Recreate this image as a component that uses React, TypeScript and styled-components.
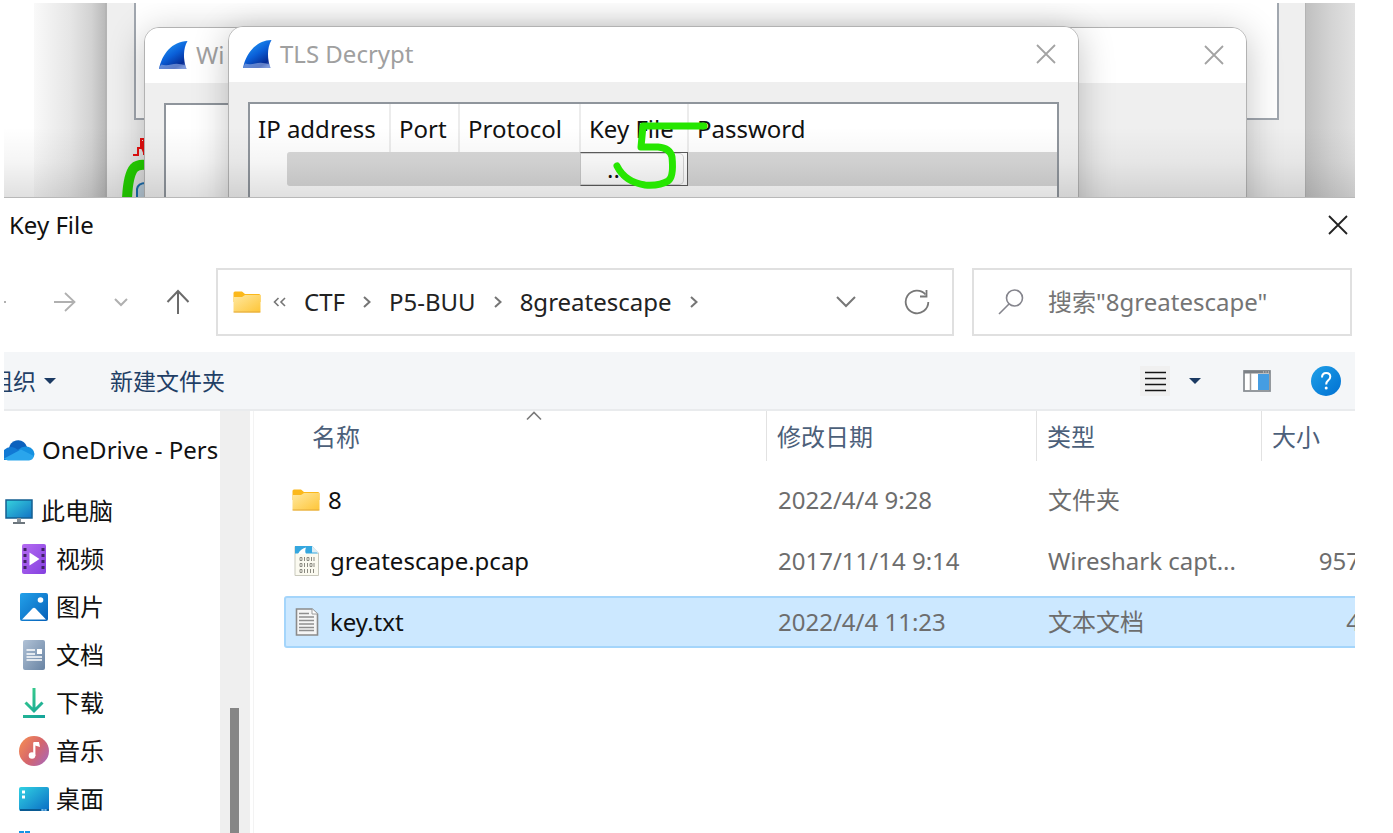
import React from "react";
import styled, { createGlobalStyle } from "styled-components";

const GlobalStyle = createGlobalStyle`
  *, *::before, *::after { box-sizing: border-box; }
  body {
    margin: 0;
    background: #fff;
    color: #111;
    font-family: "Noto Sans", "Noto Sans CJK SC", sans-serif;
    font-size: 24px;
    line-height: 32px;
  }
  button, input { font: inherit; color: inherit; }
  svg { display: block; flex: none; }
`;

const Screen = styled.main`
  margin: 3px 38px 0 4px;
  height: calc(100vh - 3px);
  display: flex;
  flex-direction: column;
  overflow: hidden;
`;

/* ---------- Desktop with the Wireshark windows ---------- */

const Desktop = styled.section`
  position: relative;
  flex: none;
  height: 194px;
  overflow: hidden;
  background: #fff;
`;

const EdgeShadow = styled.div<{ $side: "left" | "right" }>`
  position: absolute;
  top: 0;
  bottom: 0;
  ${(p) =>
    p.$side === "left"
      ? "left: 30px; width: 72px; background: linear-gradient(90deg, #f9f9f9, #e6e6e6 50%, #d2d2d2 80%, #b8b8b8);"
      : "right: 0; width: 50px; background: linear-gradient(90deg, #bfbfbf, #d3d3d3 50%, #e2e2e2);"}
`;

const MainWindow = styled.div`
  position: absolute;
  inset: 0 49px 0 101px;
  border: solid #b4b4b4;
  border-width: 0 1px 0 2px;
  background: #efefef;
`;

const MainPane = styled.div`
  margin: 0 26px 0 27px;
  height: 117px;
  border: 2px solid #a1a7af;
  border-top: 0;
  background: #fff;
`;

const DialogWindow = styled.div<{ $left: number; $right: number; $top: number }>`
  position: absolute;
  top: ${(p) => p.$top}px;
  left: ${(p) => p.$left}px;
  right: ${(p) => p.$right}px;
  height: 220px;
  border: 1px solid #b2b2b2;
  border-radius: 15px 15px 0 0;
  background: #efefef;
  box-shadow: 0 6px 36px rgba(0, 0, 0, 0.24);
  overflow: hidden;
`;

const WindowTitle = styled.header`
  display: flex;
  align-items: center;
  gap: 8px;
  height: 55px;
  padding: 0 22px 1px 13px;
  background: #fff;
  color: #a0a0a0;
  white-space: nowrap;
`;

const TitleText = styled.span`
  flex: 1;
`;

const GhostButton = styled.button`
  display: flex;
  align-items: center;
  justify-content: center;
  flex: none;
  padding: 0;
  border: 0;
  background: none;
`;

const WindowPane = styled.div<{ $short?: boolean }>`
  margin: 20px ${(p) => (p.$short ? 240 : 19)}px 0 19px;
  height: 160px;
  border: 2px solid #8f959c;
  background: #fff;
`;

const KeyTable = styled.table`
  width: 100%;
  border-collapse: collapse;
  table-layout: fixed;

  th {
    height: 48px;
    padding: 2px 0 0 8px;
    border-right: 2px solid #ececec;
    font-weight: 400;
    text-align: left;
    white-space: nowrap;
  }
  th:last-child { border-right: 0; }
  td { height: 34px; padding: 0; }
`;

const SelectedCell = styled.div<{ $indent?: boolean }>`
  height: 34px;
  margin-left: ${(p) => (p.$indent ? 37 : 0)}px;
  border-radius: ${(p) => (p.$indent ? "3px 0 0 3px" : "0")};
  background: #d8d8d8;
`;

const KeyFileEditor = styled.div`
  display: flex;
  height: 34px;
  border: 1px solid #5c5c5c;
  border-left-color: #c8c8c8;
  background: #fff;
`;

const BrowseButton = styled.button`
  flex: 1;
  margin-right: 3px;
  padding: 0 36px 0 26px;
  border: 1px solid #d4d4d4;
  border-left: 0;
  border-radius: 0 5px 5px 0;
  background: #fdfdfd;
  line-height: 28px;
  text-align: left;
`;

const BottomShade = styled.div`
  position: absolute;
  inset: auto 0 0 0;
  height: 70px;
  background: linear-gradient(180deg, rgba(0, 0, 0, 0), rgba(0, 0, 0, 0.04) 50%, rgba(0, 0, 0, 0.12));
  pointer-events: none;
`;

const Overlay = styled.svg<{ $left: number; $top: number }>`
  position: absolute;
  left: ${(p) => p.$left}px;
  top: ${(p) => p.$top}px;
  pointer-events: none;
`;

/* ---------- Open file dialog ---------- */

const FileDialog = styled.section`
  flex: 1;
  min-height: 0;
  display: flex;
  flex-direction: column;
  border-top: 1px solid #b8b8b8;
  background: #fff;
`;

const DialogTitle = styled.header`
  display: flex;
  align-items: center;
  justify-content: space-between;
  height: 56px;
  padding: 0 7px 2px 5px;
`;

const DialogHeading = styled.h1`
  margin: 0;
  font-size: 24px;
  font-weight: 400;
`;

const NavRow = styled.div`
  display: flex;
  align-items: center;
  height: 98px;
  padding: 0 3px 2px 0;
`;

const NavButtons = styled.nav`
  display: flex;
  align-items: center;
  width: 232px;
  margin-left: -20px;
  gap: 38px;
`;

const BackButton = styled(GhostButton)`
  margin-right: 10px;
`;

const AddressBar = styled.div`
  display: flex;
  align-items: center;
  flex: 1;
  min-width: 0;
  height: 68px;
  margin-right: 18px;
  padding: 0 22px 0 15px;
  border: 2px solid #e0e0e0;
  white-space: nowrap;
`;

const Crumbs = styled.div`
  display: flex;
  align-items: center;
  flex: 1;
  gap: 18px;
  margin-left: 12px;
`;

const Crumb = styled.a`
  color: #222;
  text-decoration: none;
`;

const AddressActions = styled.div`
  display: flex;
  align-items: center;
  gap: 48px;
`;

const SearchBox = styled.label`
  display: flex;
  align-items: center;
  gap: 24px;
  width: 380px;
  height: 68px;
  padding: 0 16px 0 24px;
  border: 2px solid #e0e0e0;
`;

const SearchInput = styled.input`
  flex: 1;
  min-width: 0;
  padding: 0;
  border: 0;
  outline: 0;
  background: none;

  &::placeholder { color: #757575; opacity: 1; }
`;

const Toolbar = styled.div`
  display: flex;
  align-items: center;
  flex: none;
  height: 59px;
  padding-right: 14px;
  border-bottom: 2px solid #e9ebed;
  background: #f4f6f8;
  color: #1f3f66;
`;

const ToolbarButton = styled.button<{ $clipped?: boolean }>`
  display: flex;
  align-items: center;
  gap: 8px;
  margin-left: ${(p) => (p.$clipped ? -14 : 54)}px;
  padding: 0;
  border: 0;
  background: none;
  font-size: 23px;
  white-space: nowrap;
`;

const ToolbarIcons = styled.div`
  display: flex;
  align-items: center;
  margin-left: auto;
  gap: 40px;
`;

const ViewPicker = styled.div`
  display: flex;
  align-items: center;
  gap: 19px;
  margin-right: 2px;
`;

const DialogBody = styled.div`
  display: flex;
  flex: 1;
  min-height: 0;
`;

const Sidebar = styled.nav`
  flex: none;
  width: 215px;
  padding-top: 15px;
  overflow: hidden;
`;

const Tree = styled.ul`
  margin: 0;
  padding: 0;
  list-style: none;
`;

const TreeItem = styled.li<{ $level: 0 | 1; $spaced?: boolean }>`
  height: 48px;
  margin-bottom: ${(p) => (p.$spaced ? 13 : 0)}px;
  padding-left: ${(p) => (p.$level ? 15 : 0)}px;
`;

const TreeLink = styled.a`
  display: flex;
  align-items: center;
  height: 48px;
  gap: 7px;
  color: inherit;
  text-decoration: none;
  white-space: nowrap;
`;

const ScrollTrack = styled.div`
  flex: none;
  width: 30px;
  margin-left: 1px;
  padding-top: 297px;
  background: #efefef;
`;

const ScrollThumb = styled.div`
  width: 9px;
  height: 100%;
  margin-left: 10px;
  background: #868686;
`;

const FilePane = styled.div`
  position: relative;
  flex: 1;
  min-width: 0;
  margin-left: 3px;
  border-left: 1px solid #f3f3f3;
  overflow: hidden;
`;

const SortMark = styled.svg`
  position: absolute;
  left: 272px;
  top: 0;
`;

const FileTable = styled.table`
  display: block;
  margin: 0 -7px 0 30px;

  thead { display: block; }
  tbody {
    display: flex;
    flex-direction: column;
    gap: 9px;
    padding-top: 13px;
  }
`;

const FileRow = styled.tr<{ $selected?: boolean; $head?: boolean }>`
  display: grid;
  grid-template-columns: minmax(0, 1fr) 270px 225px 101px;
  align-items: center;
  height: ${(p) => (p.$head ? 50 : 52)}px;
  border: ${(p) => (p.$head ? "0" : "2px solid transparent")};
  border-radius: 3px;
  ${(p) => p.$selected && "background: #cce8ff; border-color: #a4d5fb;"}
`;

const HeadCell = styled.th<{ $first?: boolean }>`
  height: 50px;
  padding: 10px 0 0 ${(p) => (p.$first ? 28 : 10)}px;
  border-left: ${(p) => (p.$first ? 0 : 1)}px solid #e2e2e2;
  color: #4c607a;
  font-weight: 400;
  text-align: left;
`;

const NameCell = styled.td`
  display: flex;
  align-items: center;
  gap: 8px;
  padding: 0 0 0 6px;
`;

const InfoCell = styled.td<{ $right?: boolean }>`
  padding: 0 0 0 ${(p) => (p.$right ? 0 : 14)}px;
  color: #6d6d6d;
  text-align: ${(p) => (p.$right ? "right" : "left")};
  white-space: nowrap;
`;

/* ---------- Icons ---------- */

const SharkFin = ({ id }: { id: string }) => (
  <svg width="30" height="30" viewBox="0 0 30 30">
    <defs>
      <linearGradient id={id} x1="0.2" y1="0.1" x2="0.8" y2="1">
        <stop offset="0" stopColor="#2196f3" />
        <stop offset="0.45" stopColor="#0a5fd8" />
        <stop offset="0.85" stopColor="#062b93" />
        <stop offset="1" stopColor="#5f7fd0" />
      </linearGradient>
    </defs>
    <path d="M1 29C4 14 14 1.500 29.500 1C25 9 25 19 28.500 29Z" fill={`url(#${id})`} />
    <path d="M1 29Q2 26 3 24.500Q8 26 13 24.500Q20 22.500 27.500 25.500L28.500 29Z" fill="#8fa9e2" opacity="0.65" />
  </svg>
);

const Cross = ({ color }: { color: string }) => (
  <svg width="20" height="20" viewBox="0 0 20 20" fill="none" stroke={color} strokeWidth="1.8">
    <path d="M1 1L19 19M19 1L1 19" />
  </svg>
);

const ArrowRight = ({ flip }: { flip?: boolean }) => (
  <svg width="22" height="20" viewBox="0 0 22 20" fill="none" stroke="#b0b0b0" strokeWidth="1.8">
    <path d={flip ? "M22 10H1M11 1L2 10L11 19" : "M0 10H21M11 1L20.500 10L11 19"} />
  </svg>
);

const Chevron = ({ w, color }: { w: number; color: string }) => (
  <svg width={w} height={w / 2 + 2} viewBox={`0 0 ${w} ${w / 2 + 2}`} fill="none" stroke={color} strokeWidth="2">
    <path d={`M1 1L${w / 2} ${w / 2}L${w - 1} 1`} />
  </svg>
);

const ArrowUp = () => (
  <svg width="24" height="26" viewBox="0 0 24 26" fill="none" stroke="#6b6b6b" strokeWidth="2">
    <path d="M12 25V2M1.500 13L12 2L22.500 13" />
  </svg>
);

const CrumbArrow = () => (
  <svg width="8" height="12" viewBox="0 0 8 12" fill="none" stroke="#757575" strokeWidth="2">
    <path d="M1 1L6.500 6L1 11" />
  </svg>
);

const DoubleLeft = () => (
  <svg width="13" height="10" viewBox="0 0 13 10" fill="none" stroke="#757575" strokeWidth="1.600">
    <path d="M5.500 1L1.500 5L5.500 9M12 1L8 5L12 9" />
  </svg>
);

const Refresh = () => (
  <svg width="26" height="28" viewBox="0 0 26 28" fill="none" stroke="#777" strokeWidth="1.800">
    <path d="M21.500 6.500A11.300 11.300 0 1 0 24.300 14" />
    <path d="M22.500 2V8.500H16" />
  </svg>
);

const Magnifier = () => (
  <svg width="26" height="26" viewBox="0 0 26 26" fill="none" stroke="#85858d" strokeWidth="1.600">
    <circle cx="16.500" cy="9" r="8" />
    <path d="M11 15L1 25" />
  </svg>
);

const Caret = () => (
  <svg width="12" height="8" viewBox="0 0 12 8">
    <path d="M0 1H12L6 7Z" fill="#1b3a63" />
  </svg>
);

const FolderIcon = ({ id }: { id: string }) => (
  <svg width="28" height="24" viewBox="0 0 28 24">
    <defs>
      <linearGradient id={id} x1="0" y1="0" x2="1" y2="1">
        <stop offset="0" stopColor="#ffe8a0" />
        <stop offset="1" stopColor="#fec536" />
      </linearGradient>
    </defs>
    <path d="M0.500 3Q0.500 1.500 2 1.500H9L12 4H26Q27.500 4 27.500 5.500V12H0.500Z" fill="#fbb81b" />
    <path d="M0.500 7H9L12 5H27.500V21Q27.500 22.500 26 22.500H2Q0.500 22.500 0.500 21Z" fill={`url(#${id})`} />
    <path d="M0.500 22H27.500" stroke="#e2a83a" />
  </svg>
);

const ListIcon = () => (
  <svg width="30" height="30" viewBox="0 0 30 30">
    <rect width="30" height="30" fill="#f0f0f0" />
    <path d="M5 6.500H26M5 12.500H26M5 18.500H26M5 24.500H26" stroke="#151515" strokeWidth="1.600" />
  </svg>
);

const PaneIcon = () => (
  <svg width="28" height="22" viewBox="0 0 28 22">
    <rect x="1" y="1" width="26" height="20" fill="#fff" stroke="#8a8f94" strokeWidth="1.800" />
    <path d="M1 2H27" stroke="#7c8186" strokeWidth="3" />
    <path d="M20 2H26" stroke="#d8d8d8" strokeDasharray="1 1.500" />
    <path d="M7.500 3V20" stroke="#9a9a9a" strokeWidth="1.500" />
    <rect x="15" y="4" width="11" height="16" fill="#459de2" />
  </svg>
);

const HelpIcon = () => (
  <svg width="30" height="30" viewBox="0 0 30 30">
    <defs>
      <linearGradient id="help" x1="0" y1="0" x2="1" y2="1">
        <stop offset="0" stopColor="#1fa0e8" />
        <stop offset="1" stopColor="#0070d2" />
      </linearGradient>
    </defs>
    <circle cx="15" cy="15" r="15" fill="url(#help)" />
    <path d="M11 11.500Q11 7 15.200 7Q19.300 7 19.300 10.800Q19.300 13 17 14.600Q15.200 16 15.200 18.500" fill="none" stroke="#fff" strokeWidth="2" />
    <circle cx="15.200" cy="22" r="1.500" fill="#fff" />
  </svg>
);

const CloudIcon = () => (
  <svg width="31" height="24" viewBox="0 0 31 24">
    <path d="M5 10Q6 4 12 2.500Q20 1 23 9L16 15L6 12Z" fill="#0c61bd" />
    <path d="M0 22V12Q5 7.500 11 10L24 18L20 22Z" fill="#1179d4" />
    <path d="M14 12Q19 7.500 24 8.800Q30 10.500 30.500 16Q30 20 27 20Z" fill="#1590e0" />
    <path d="M1 20L17 11.500L30 18Q29 22 25 22.500H4Q1.500 22 0 20.500Z" fill="#2aa5ec" />
  </svg>
);

const MonitorIcon = () => (
  <svg width="30" height="28" viewBox="0 0 30 28">
    <defs>
      <linearGradient id="monitor" x1="0" y1="0" x2="1" y2="1">
        <stop offset="0" stopColor="#36d3dd" />
        <stop offset="1" stopColor="#1272c4" />
      </linearGradient>
    </defs>
    <rect x="2" y="3" width="26" height="18" fill="url(#monitor)" stroke="#155f91" strokeWidth="1.500" />
    <path d="M15 21V26" stroke="#8b959c" strokeWidth="4" />
    <path d="M9 26H21" stroke="#6d767d" strokeWidth="2" />
  </svg>
);

const VideoIcon = () => (
  <svg width="30" height="30" viewBox="0 0 30 30">
    <defs>
      <linearGradient id="video" x1="0" y1="0" x2="1" y2="1">
        <stop offset="0" stopColor="#b56bf2" />
        <stop offset="1" stopColor="#8440df" />
      </linearGradient>
    </defs>
    <rect x="3" y="0" width="24" height="30" rx="2" fill="url(#video)" />
    <path d="M6 4V27M24 4V27" stroke="#402066" strokeWidth="3" strokeDasharray="3 3" />
    <path d="M10.500 8.500L20.500 15L10.500 21.500Z" fill="#fff" />
  </svg>
);

const PictureIcon = () => (
  <svg width="30" height="28" viewBox="0 0 30 28">
    <defs>
      <linearGradient id="picture" x1="0" y1="0" x2="1" y2="1">
        <stop offset="0" stopColor="#23a1ea" />
        <stop offset="1" stopColor="#0560b8" />
      </linearGradient>
    </defs>
    <rect x="1" y="0" width="28" height="28" rx="2" fill="url(#picture)" />
    <path d="M3 26.500L13.500 15.500Q15 14 16.500 15.500L27 26.500Z" fill="#fff" />
    <circle cx="21.500" cy="7" r="2.800" fill="#fff" />
  </svg>
);

const DocumentIcon = () => (
  <svg width="30" height="30" viewBox="0 0 30 30">
    <defs>
      <linearGradient id="document" x1="0" y1="0" x2="1" y2="1">
        <stop offset="0" stopColor="#b1c2d6" />
        <stop offset="1" stopColor="#6883a3" />
      </linearGradient>
    </defs>
    <rect x="4" y="0" width="22" height="30" rx="2" fill="url(#document)" />
    <path d="M7.500 10H16M7.500 14H16M7.500 17H23M7.500 20H23" stroke="#fff" strokeWidth="1.700" />
    <rect x="18" y="9" width="5" height="5" fill="#fff" />
  </svg>
);

const DownloadIcon = () => (
  <svg width="30" height="30" viewBox="0 0 30 30" fill="none">
    <defs>
      <linearGradient id="download" gradientUnits="userSpaceOnUse" x1="4" y1="0" x2="26" y2="30">
        <stop offset="0" stopColor="#3bd089" />
        <stop offset="1" stopColor="#13a29b" />
      </linearGradient>
    </defs>
    <path d="M15 0V22M6.500 14.500L15 23L23.500 14.500M4 28.500H26" stroke="url(#download)" strokeWidth="3" />
  </svg>
);

const MusicIcon = () => (
  <svg width="30" height="30" viewBox="0 0 30 30">
    <defs>
      <linearGradient id="music" x1="0" y1="0.200" x2="1" y2="0.900">
        <stop offset="0" stopColor="#f38a55" />
        <stop offset="0.500" stopColor="#d5656c" />
        <stop offset="1" stopColor="#a768bb" />
      </linearGradient>
    </defs>
    <circle cx="15" cy="15" r="15" fill="url(#music)" />
    <circle cx="13" cy="19.500" r="3.300" fill="#fff" />
    <path d="M15.300 20V7" fill="none" stroke="#fff" strokeWidth="2.200" />
    <path d="M14.200 6H20L21 11L16 9.500Z" fill="#fff" />
  </svg>
);

const DesktopIcon = () => (
  <svg width="30" height="24" viewBox="0 0 30 24">
    <defs>
      <linearGradient id="desktop" x1="0" y1="0" x2="1" y2="1">
        <stop offset="0" stopColor="#31d2e3" />
        <stop offset="1" stopColor="#0a6cc4" />
      </linearGradient>
    </defs>
    <rect width="30" height="24" rx="2" fill="url(#desktop)" />
    <path d="M3 3.500H6V6.500H3ZM3 8.500H6V11.500H3Z" fill="#fff" />
    <path d="M1 23H22M28 23H30" stroke="#095a92" strokeWidth="2" />
    <path d="M22.500 23H28" stroke="#dff3fb" strokeDasharray="2 1" />
  </svg>
);

const DiskIcon = () => (
  <svg width="30" height="32" viewBox="0 0 30 32">
    <path d="M0 0H5V5H0ZM6 0H11V5H6ZM0 6H5V11H0ZM6 6H11V11H6Z" fill="#1495e6" />
    <rect y="14" width="30" height="12" rx="2" fill="#9aa2a8" />
  </svg>
);

const CaptureIcon = () => (
  <svg width="30" height="30" viewBox="0 0 30 30">
    <path d="M3 0.500H20L26.500 7V29.500H3Z" fill="#fbfaf0" stroke="#c9c9bd" />
    <path d="M3 0H20L26 7.500H3Z" fill="#35a7df" />
    <path d="M6 8C8 4 11 2 14 1.500C13 4 13 6 14 8Z" fill="#fff" />
    <path d="M20 0V6.500H26.500Z" fill="#dceef6" />
    <g fill="none" stroke="#8b8b82" strokeWidth="1">
      <path d="M8 11.500h2v3h-2zM12.500 11v4M15 11.500h2v3h-2zM19.500 11v4M22 11v4" />
      <path d="M8 17.500h2v3h-2zM12.500 17v4M15.500 17v4M18 17.500h2v3h-2zM22 17v4" />
      <path d="M8 23.500h2v3h-2zM12.500 23v4M15.500 23v4M18.500 23v4M21.500 23v4" />
    </g>
  </svg>
);

const TextFileIcon = () => (
  <svg width="30" height="30" viewBox="0 0 30 30">
    <path d="M4.500 2H20L25.500 7V28H4.500Z" fill="#f5f5f5" stroke="#8b8b8b" strokeWidth="1.600" />
    <path d="M20 2V7H25.500" fill="#fff" stroke="#9b9b9b" />
    <path d="M7 6.500H17M7 10H22M7 13.500H22M7 17H22M7 20.500H22M7 23.500H22" stroke="#8e8e8e" strokeWidth="1.400" />
  </svg>
);

/* ---------- Data ---------- */

const places: { label: string; level: 0 | 1; icon: React.ReactNode; spaced?: boolean }[] = [
  { label: "OneDrive - Pers", level: 0, icon: <CloudIcon />, spaced: true },
  { label: "此电脑", level: 0, icon: <MonitorIcon /> },
  { label: "视频", level: 1, icon: <VideoIcon /> },
  { label: "图片", level: 1, icon: <PictureIcon /> },
  { label: "文档", level: 1, icon: <DocumentIcon /> },
  { label: "下载", level: 1, icon: <DownloadIcon /> },
  { label: "音乐", level: 1, icon: <MusicIcon /> },
  { label: "桌面", level: 1, icon: <DesktopIcon /> },
  { label: "", level: 1, icon: <DiskIcon /> },
];

const files = [
  { name: "8", date: "2022/4/4 9:28", type: "文件夹", size: "", icon: <FolderIcon id="folder-row" /> },
  { name: "greatescape.pcap", date: "2017/11/14 9:14", type: "Wireshark capt...", size: "957", icon: <CaptureIcon /> },
  { name: "key.txt", date: "2022/4/4 11:23", type: "文本文档", size: "4", icon: <TextFileIcon />, selected: true },
];

const crumbs = ["CTF", "P5-BUU", "8greatescape"];

export default function App() {
  return (
    <>
      <GlobalStyle />
      <Screen>
        <Desktop>
          <EdgeShadow $side="left" />
          <EdgeShadow $side="right" />
          <MainWindow>
            <MainPane />
          </MainWindow>
          <Overlay $left={116} $top={134} width="26" height="62" viewBox="0 0 26 62" fill="none">
            <path d="M13 18H18V11H21V2H24V18" stroke="#f01010" strokeWidth="2" />
            <path d="M21 11V4H26V18H24Z" fill="#f01010" />
            <path d="M7 62Q8 38 14 31Q18 27 26 28" stroke="#26d900" strokeWidth="10" />
            <path d="M17 62V52Q18 46 26 46V62Z" fill="#c9dcea" stroke="#1d74b8" strokeWidth="2" />
          </Overlay>
          <DialogWindow $left={140} $right={108} $top={24}>
            <WindowTitle>
              <SharkFin id="fin-back" />
              <TitleText>Wi</TitleText>
              <GhostButton aria-label="Close"><Cross color="#a3a3a3" /></GhostButton>
            </WindowTitle>
            <WindowPane $short />
          </DialogWindow>
          <DialogWindow $left={224} $right={276} $top={23}>
            <WindowTitle>
              <SharkFin id="fin-front" />
              <TitleText>TLS Decrypt</TitleText>
              <GhostButton aria-label="Close"><Cross color="#a3a3a3" /></GhostButton>
            </WindowTitle>
            <WindowPane>
              <KeyTable>
                <colgroup>
                  <col style={{ width: 140 }} />
                  <col style={{ width: 69 }} />
                  <col style={{ width: 121 }} />
                  <col style={{ width: 108 }} />
                  <col />
                </colgroup>
                <thead>
                  <tr>
                    <th>IP address</th>
                    <th>Port</th>
                    <th>Protocol</th>
                    <th>Key File</th>
                    <th>Password</th>
                  </tr>
                </thead>
                <tbody>
                  <tr>
                    <td><SelectedCell $indent /></td>
                    <td><SelectedCell /></td>
                    <td><SelectedCell /></td>
                    <td>
                      <KeyFileEditor>
                        <BrowseButton>...</BrowseButton>
                      </KeyFileEditor>
                    </td>
                    <td><SelectedCell /></td>
                  </tr>
                </tbody>
              </KeyTable>
            </WindowPane>
          </DialogWindow>
          <BottomShade />
          <Overlay $left={606} $top={116} width="100" height="74" viewBox="0 0 100 74" fill="none">
            <path
              d="M94 7L33 7L31 28L48 28Q60 29 62 38Q64 58 58 62Q50 67 35 66Q15 63 7 47"
              stroke="#26e600"
              strokeWidth="7"
              strokeLinecap="round"
              strokeLinejoin="round"
            />
          </Overlay>
        </Desktop>

        <FileDialog>
          <DialogTitle>
            <DialogHeading>Key File</DialogHeading>
            <GhostButton aria-label="Close"><Cross color="#222" /></GhostButton>
          </DialogTitle>
          <NavRow>
            <NavButtons>
              <BackButton aria-label="Back"><ArrowRight flip /></BackButton>
              <GhostButton aria-label="Forward"><ArrowRight /></GhostButton>
              <GhostButton aria-label="Recent"><Chevron w={14} color="#b0b0b0" /></GhostButton>
              <GhostButton aria-label="Up"><ArrowUp /></GhostButton>
            </NavButtons>
            <AddressBar>
              <FolderIcon id="folder-bar" />
              <Crumbs>
                <DoubleLeft />
                {crumbs.map((c) => (
                  <React.Fragment key={c}>
                    <Crumb href="#">{c}</Crumb>
                    <CrumbArrow />
                  </React.Fragment>
                ))}
              </Crumbs>
              <AddressActions>
                <GhostButton aria-label="History"><Chevron w={20} color="#777" /></GhostButton>
                <GhostButton aria-label="Refresh"><Refresh /></GhostButton>
              </AddressActions>
            </AddressBar>
            <SearchBox>
              <Magnifier />
              <SearchInput type="text" aria-label="搜索" placeholder={'搜索"8greatescape"'} />
            </SearchBox>
          </NavRow>

          <Toolbar>
            <ToolbarButton $clipped>组织 <Caret /></ToolbarButton>
            <ToolbarButton>新建文件夹</ToolbarButton>
            <ToolbarIcons>
              <ViewPicker>
                <GhostButton aria-label="View"><ListIcon /></GhostButton>
                <GhostButton aria-label="More views"><Caret /></GhostButton>
              </ViewPicker>
              <GhostButton aria-label="Preview pane"><PaneIcon /></GhostButton>
              <GhostButton aria-label="Help"><HelpIcon /></GhostButton>
            </ToolbarIcons>
          </Toolbar>

          <DialogBody>
            <Sidebar>
              <Tree>
                {places.map((p, i) => (
                  <TreeItem key={i} $level={p.level} $spaced={p.spaced}>
                    <TreeLink href="#">
                      {p.icon}
                      {p.label}
                    </TreeLink>
                  </TreeItem>
                ))}
              </Tree>
            </Sidebar>
            <ScrollTrack>
              <ScrollThumb />
            </ScrollTrack>
            <FilePane>
              <SortMark width="16" height="10" viewBox="0 0 16 10" fill="none" stroke="#7a7a7a" strokeWidth="1.600">
                <path d="M1 8.500L8 1.500L15 8.500" />
              </SortMark>
              <FileTable>
                <thead>
                  <FileRow $head>
                    <HeadCell $first>名称</HeadCell>
                    <HeadCell>修改日期</HeadCell>
                    <HeadCell>类型</HeadCell>
                    <HeadCell>大小</HeadCell>
                  </FileRow>
                </thead>
                <tbody>
                  {files.map((f) => (
                    <FileRow key={f.name} $selected={f.selected}>
                      <NameCell>
                        {f.icon}
                        {f.name}
                      </NameCell>
                      <InfoCell>{f.date}</InfoCell>
                      <InfoCell>{f.type}</InfoCell>
                      <InfoCell $right>{f.size}</InfoCell>
                    </FileRow>
                  ))}
                </tbody>
              </FileTable>
            </FilePane>
          </DialogBody>
        </FileDialog>
      </Screen>
    </>
  );
}
